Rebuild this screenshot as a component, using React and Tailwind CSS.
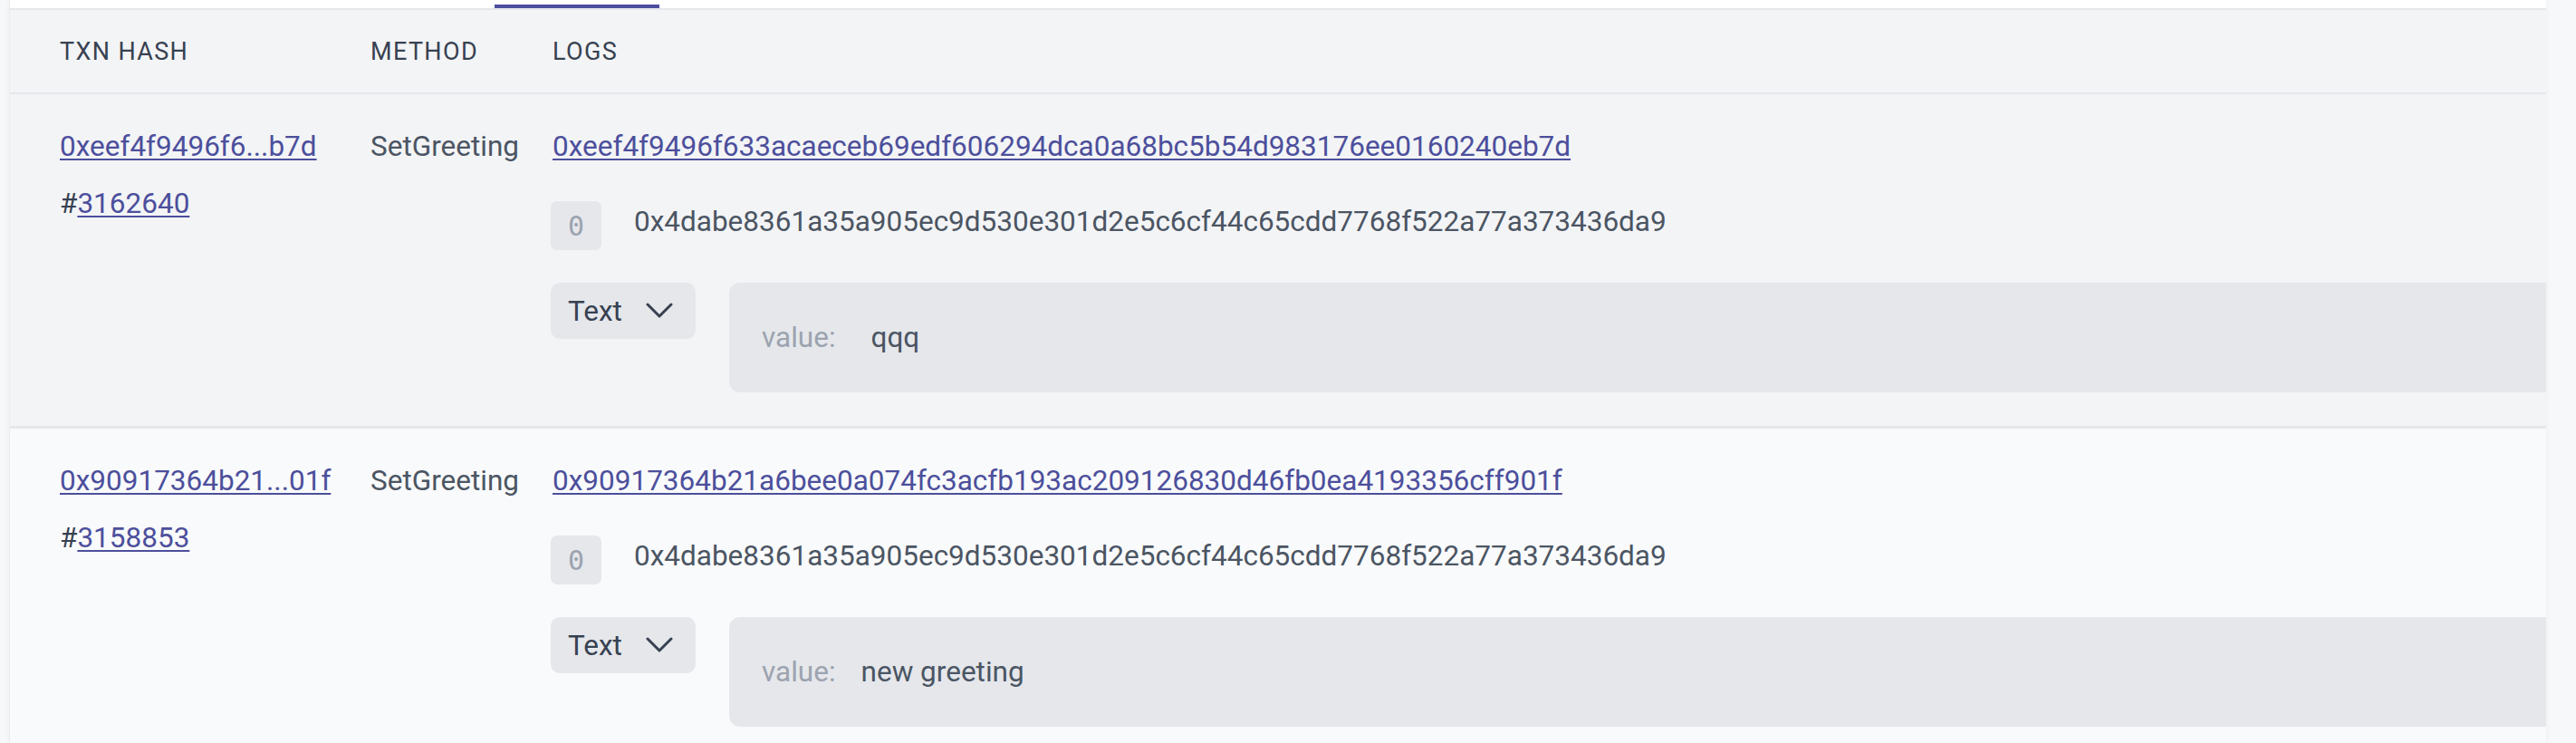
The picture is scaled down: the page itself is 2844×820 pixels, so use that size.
import React from 'react';

const rows = [
  {
    hash: '0xeef4f9496f6...b7d',
    block: '3162640',
    method: 'SetGreeting',
    tx: '0xeef4f9496f633acaeceb69edf606294dca0a68bc5b54d983176ee0160240eb7d',
    topic: '0x4dabe8361a35a905ec9d530e301d2e5c6cf44c65cdd7768f522a77a373436da9',
    value: 'qqq',
    bg: 'bg-[#f3f4f6]',
    valueGap: 'ml-[39px]',
  },
  {
    hash: '0x90917364b21...01f',
    block: '3158853',
    method: 'SetGreeting',
    tx: '0x90917364b21a6bee0a074fc3acfb193ac209126830d46fb0ea4193356cff901f',
    topic: '0x4dabe8361a35a905ec9d530e301d2e5c6cf44c65cdd7768f522a77a373436da9',
    value: 'new greeting',
    bg: 'bg-[#f9fafb]',
    valueGap: 'ml-[28px]',
  },
];

const linkCls = 'text-[#4c4f9c] underline decoration-2 underline-offset-[3px]';

const Chevron = () => (
  <svg width="30" height="18" viewBox="0 0 30 18" fill="none">
    <polyline points="2,2 15,15 28,2" stroke="#374151" strokeWidth="3" strokeLinecap="round" strokeLinejoin="round" />
  </svg>
);

const LogRow = ({ row }) => (
  <div className={`flex ${row.bg} border-b-[3px] border-[#e5e7eb] pt-[35px] pb-[37px]`}>
    <div className="w-[398px] shrink-0 pl-[55px]">
      <a className={linkCls}>{row.hash}</a>
      <div className="mt-[18px] text-[#374151]">
        #<a className={linkCls}>{row.block}</a>
      </div>
    </div>
    <div className="w-[201px] shrink-0 text-[#4b5563]">{row.method}</div>
    <div className="flex-1 min-w-0">
      <a className={linkCls}>{row.tx}</a>
      <div className="mt-[38px] flex items-start gap-[36px] -ml-[2px]">
        <div className="w-[56px] h-[54px] shrink-0 rounded-[7px] bg-[#e5e7eb] flex items-center justify-center font-['DejaVu_Sans_Mono',monospace] text-[30px] text-[#9ca3af]">
          0
        </div>
        <div className="text-[#4b5563]">{row.topic}</div>
      </div>
      <div className="mt-[36px] flex gap-[37px] -ml-[2px]">
        <div className="w-[160px] h-[62px] shrink-0 rounded-[10px] bg-[#e5e7eb] flex items-center justify-between pl-[19px] pr-[25px] text-[#374151]">
          <span>Text</span>
          <Chevron />
        </div>
        <div className="flex-1 h-[121px] rounded-l-[12px] bg-[#e5e7eb] flex items-center pl-[36px]">
          <span className="text-[#9ca3af]">value:</span>
          <span className={`${row.valueGap} text-[#4b5563]`}>{row.value}</span>
        </div>
      </div>
    </div>
  </div>
);

export default function App() {
  return (
    <div className="w-full h-[820px] overflow-hidden bg-[#f7f8fa] flex pl-[10px] pr-[33px] font-['Roboto','Liberation_Sans',sans-serif] text-[31.5px] leading-[45px]">
      <div className="flex-1 min-w-0 border-l border-[#eaecef] bg-white overflow-hidden shadow-[0_0_6px_rgba(0,0,0,0.05)]">
        <div className="h-[11px] border-b-2 border-[#e5e7eb] pt-[5px] pl-[535px]">
          <div className="w-[182px] h-[4px] bg-[#4c4f9c]" />
        </div>
        <div className="flex items-center h-[93px] bg-[#f3f4f6] border-b-2 border-[#e5e7eb] text-[27px] leading-[36px] tracking-wider text-[#374151] uppercase">
          <div className="w-[398px] shrink-0 pl-[55px]">Txn Hash</div>
          <div className="w-[201px] shrink-0">Method</div>
          <div className="flex-1">Logs</div>
        </div>
        {rows.map((row) => (
          <LogRow key={row.tx} row={row} />
        ))}
      </div>
    </div>
  );
}
